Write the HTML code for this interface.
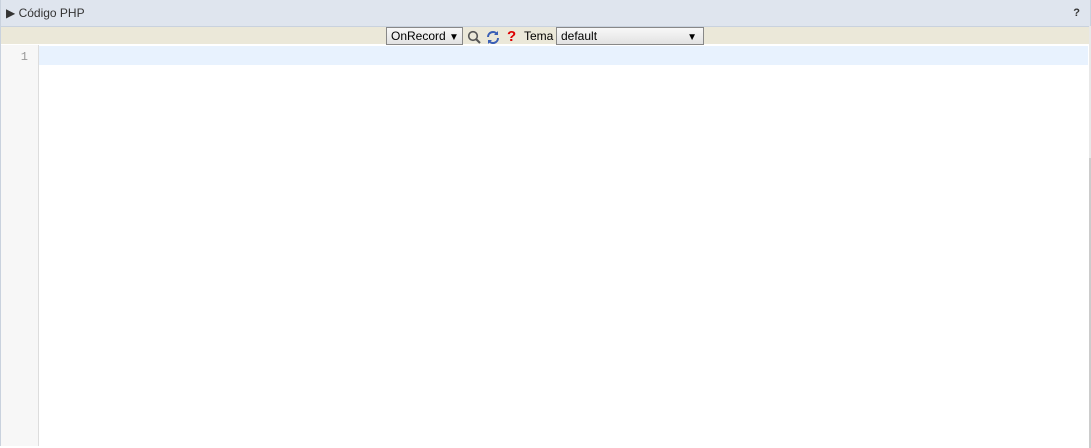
<!DOCTYPE html>
<html><head><style>
body{margin:0;width:1091px;height:446px;overflow:hidden;background:#fff;font-family:"Liberation Sans",sans-serif;position:relative}
.hdr{position:absolute;left:0;top:0;width:1089px;height:26px;background:#dfe5ee;border:1px solid #c9d2de;border-top:0}
.hdr .t{position:absolute;left:5px;top:6px;font-size:12px;color:#333}
.hdr .q{position:absolute;right:10px;top:7px;font-size:11px;font-weight:bold;color:#333}
.tb{position:absolute;left:1px;top:27px;width:1088px;height:17px;background:#ebe8d9}
.sel{position:absolute;top:0;height:17px;border:1px solid #888;background:linear-gradient(#f8f8f8,#e2e2e2);font-size:12px;line-height:17px;box-sizing:border-box;padding-left:4px;color:#000}
.gut{position:absolute;left:1px;top:45px;width:37px;height:401px;background:#f7f7f7;border-right:1px solid #ddd}
.gut span{position:absolute;right:10px;top:5px;font-family:"Liberation Mono",monospace;font-size:12px;color:#999}
.line{position:absolute;left:39px;top:46px;width:1049px;height:19px;background:#e8f2fe}
.lb{position:absolute;left:0;top:26px;width:1px;height:420px;background:#c9d2de}
.rb{position:absolute;right:0;top:26px;width:2px;height:420px;background:#e8e8e8}
.rb2{position:absolute;right:0;top:158px;width:2px;height:290px;background:#ccc}
</style></head><body>
<div class="hdr"><span class="t">&#9654; Código PHP</span><span class="q">?</span></div>
<div class="tb">
<div class="sel" style="left:385px;width:77px;height:18px;top:0">OnRecord <span style="font-size:10px">▼</span></div>
<svg style="position:absolute;left:466px;top:3px" width="14" height="14" viewBox="0 0 14 14"><circle cx="6" cy="6" r="4.3" fill="none" stroke="#555" stroke-width="1.6"/><path d="M9 9l4 4" stroke="#555" stroke-width="2"/></svg>
<svg style="position:absolute;left:485px;top:3px" width="14" height="15" viewBox="0 0 14 15"><path d="M2 7a5 5 0 0 1 9-3M12 8a5 5 0 0 1-9 3" fill="none" stroke="#3a5fb5" stroke-width="2"/><path d="M12 1v4h-4z M2 14v-4h4z" fill="#3a5fb5"/></svg>
<span style="position:absolute;left:506px;top:1px;font-size:15px;font-weight:bold;color:#d00">?</span>
<span style="position:absolute;left:523px;top:2px;font-size:12px">Tema</span>
<div class="sel" style="left:555px;width:148px;height:18px;top:0">default<span style="position:absolute;right:6px;top:1px;font-size:10px">▼</span></div>
</div>
<div class="lb"></div>
<div class="gut"><span>1</span></div>
<div class="line"></div>
<div class="rb"></div><div class="rb2"></div>
</body></html>
